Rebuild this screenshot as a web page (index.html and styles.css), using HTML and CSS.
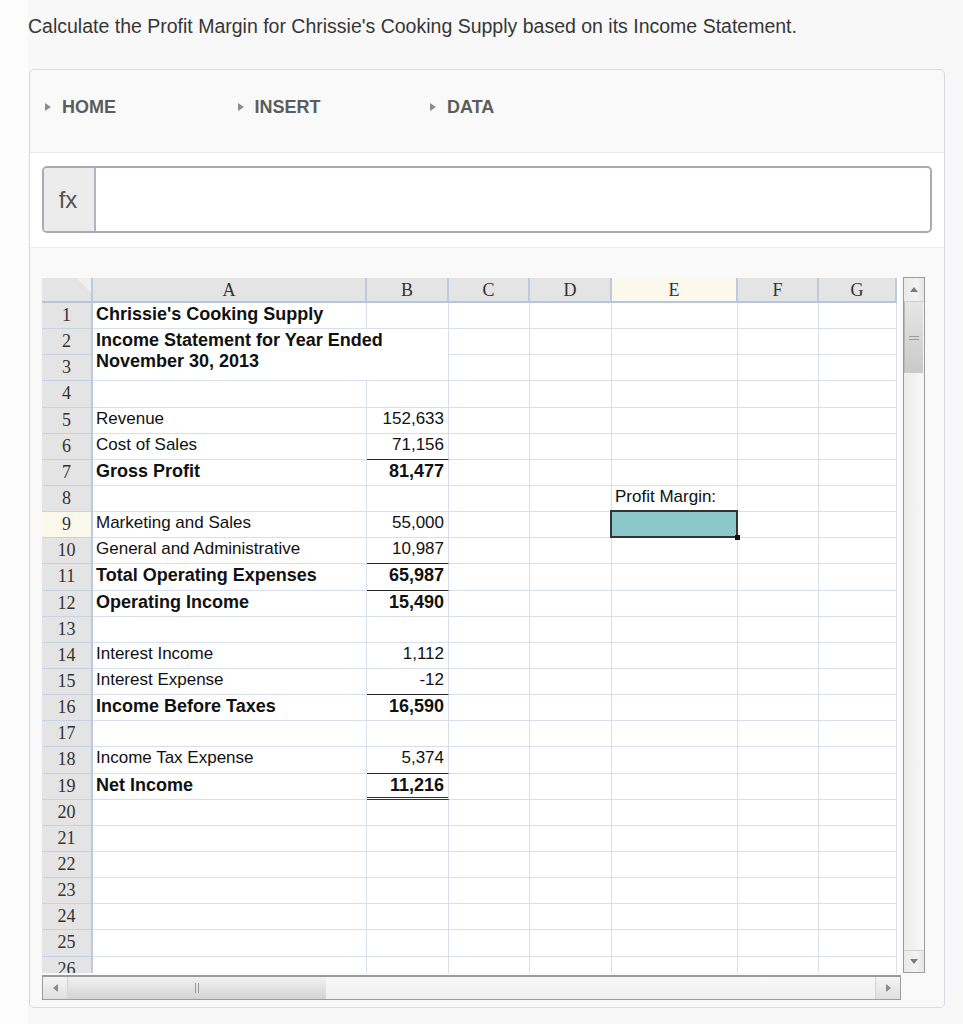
FILE: index.html
```html
<!DOCTYPE html>
<html>
<head>
<meta charset="utf-8">
<title>Profit Margin</title>
<link rel="stylesheet" href="styles.css">
</head>
<body>
<div class="page">
  <p class="title">Calculate the Profit Margin for Chrissie's Cooking Supply based on its Income Statement.</p>
  <div class="panel">
    <div class="toolbar">
      <div class="tab"><span class="tri"></span>HOME</div>
      <div class="tab"><span class="tri"></span>INSERT</div>
      <div class="tab"><span class="tri"></span>DATA</div>
    </div>
    <div class="formula">
      <div class="fxbox"><div class="fx">fx</div><div class="fxinput"></div></div>
    </div>
    <div class="gridsec">
      <div class="sheet">
        <div class="viewport">
          <div class="cells">
            <div class="ch corner"></div><div class="ch">A</div><div class="ch">B</div><div class="ch">C</div><div class="ch">D</div><div class="ch hl">E</div><div class="ch">F</div><div class="ch">G</div>

            <div class="rh">1</div><div class="c b">Chrissie's Cooking Supply</div><div class="c n"></div><div class="c"></div><div class="c"></div><div class="c"></div><div class="c"></div><div class="c"></div>

            <div class="c b merged">Income Statement for Year Ended<br>November 30, 2013</div>
            <div class="rh">2</div><div class="c"></div><div class="c"></div><div class="c"></div><div class="c"></div><div class="c"></div>
            <div class="rh">3</div><div class="c"></div><div class="c"></div><div class="c"></div><div class="c"></div><div class="c"></div>

            <div class="rh">4</div><div class="c"></div><div class="c n"></div><div class="c"></div><div class="c"></div><div class="c"></div><div class="c"></div><div class="c"></div>
            <div class="rh">5</div><div class="c">Revenue</div><div class="c n">152,633</div><div class="c"></div><div class="c"></div><div class="c"></div><div class="c"></div><div class="c"></div>
            <div class="rh">6</div><div class="c">Cost of Sales</div><div class="c n bb">71,156</div><div class="c"></div><div class="c"></div><div class="c"></div><div class="c"></div><div class="c"></div>
            <div class="rh">7</div><div class="c b">Gross Profit</div><div class="c n b">81,477</div><div class="c"></div><div class="c"></div><div class="c"></div><div class="c"></div><div class="c"></div>
            <div class="rh">8</div><div class="c"></div><div class="c n"></div><div class="c"></div><div class="c"></div><div class="c">Profit Margin:</div><div class="c"></div><div class="c"></div>
            <div class="rh hl">9</div><div class="c">Marketing and Sales</div><div class="c n">55,000</div><div class="c"></div><div class="c"></div><div class="c sel"></div><div class="c"></div><div class="c"></div>
            <div class="rh">10</div><div class="c">General and Administrative</div><div class="c n bb">10,987</div><div class="c"></div><div class="c"></div><div class="c"></div><div class="c"></div><div class="c"></div>
            <div class="rh">11</div><div class="c b">Total Operating Expenses</div><div class="c n b bb">65,987</div><div class="c"></div><div class="c"></div><div class="c"></div><div class="c"></div><div class="c"></div>
            <div class="rh">12</div><div class="c b">Operating Income</div><div class="c n b">15,490</div><div class="c"></div><div class="c"></div><div class="c"></div><div class="c"></div><div class="c"></div>
            <div class="rh">13</div><div class="c"></div><div class="c n"></div><div class="c"></div><div class="c"></div><div class="c"></div><div class="c"></div><div class="c"></div>
            <div class="rh">14</div><div class="c">Interest Income</div><div class="c n">1,112</div><div class="c"></div><div class="c"></div><div class="c"></div><div class="c"></div><div class="c"></div>
            <div class="rh">15</div><div class="c">Interest Expense</div><div class="c n bb">-12</div><div class="c"></div><div class="c"></div><div class="c"></div><div class="c"></div><div class="c"></div>
            <div class="rh">16</div><div class="c b">Income Before Taxes</div><div class="c n b">16,590</div><div class="c"></div><div class="c"></div><div class="c"></div><div class="c"></div><div class="c"></div>
            <div class="rh">17</div><div class="c"></div><div class="c n"></div><div class="c"></div><div class="c"></div><div class="c"></div><div class="c"></div><div class="c"></div>
            <div class="rh">18</div><div class="c">Income Tax Expense</div><div class="c n bb">5,374</div><div class="c"></div><div class="c"></div><div class="c"></div><div class="c"></div><div class="c"></div>
            <div class="rh">19</div><div class="c b">Net Income</div><div class="c n b dbl">11,216</div><div class="c"></div><div class="c"></div><div class="c"></div><div class="c"></div><div class="c"></div>
            <div class="rh">20</div><div class="c"></div><div class="c n"></div><div class="c"></div><div class="c"></div><div class="c"></div><div class="c"></div><div class="c"></div>
            <div class="rh">21</div><div class="c"></div><div class="c n"></div><div class="c"></div><div class="c"></div><div class="c"></div><div class="c"></div><div class="c"></div>
            <div class="rh">22</div><div class="c"></div><div class="c n"></div><div class="c"></div><div class="c"></div><div class="c"></div><div class="c"></div><div class="c"></div>
            <div class="rh">23</div><div class="c"></div><div class="c n"></div><div class="c"></div><div class="c"></div><div class="c"></div><div class="c"></div><div class="c"></div>
            <div class="rh">24</div><div class="c"></div><div class="c n"></div><div class="c"></div><div class="c"></div><div class="c"></div><div class="c"></div><div class="c"></div>
            <div class="rh">25</div><div class="c"></div><div class="c n"></div><div class="c"></div><div class="c"></div><div class="c"></div><div class="c"></div><div class="c"></div>
            <div class="rh">26</div><div class="c"></div><div class="c n"></div><div class="c"></div><div class="c"></div><div class="c"></div><div class="c"></div><div class="c"></div>
          </div>
        </div>
        <div class="vscroll">
          <div class="vbtn"><span class="arr-up"></span></div>
          <div class="vthumb"><span class="vgrip"></span></div>
          <div class="vtrack"></div>
          <div class="vbtn down"><span class="arr-down"></span></div>
        </div>
        <div class="hscroll">
          <div class="hbtn"><span class="arr-left"></span></div>
          <div class="hthumb"><span class="hgrip"></span></div>
          <div class="htrack"></div>
          <div class="hbtn right"><span class="arr-right"></span></div>
        </div>
      </div>
    </div>
  </div>
</div>
</body>
</html>
```
FILE: styles.css
```css
* { box-sizing: border-box; }
html, body { margin: 0; padding: 0; }
body {
  background: #fdfdfd;
  font-family: "Liberation Sans", Arial, sans-serif;
}
.page {
  margin-left: 28px;
  background: #f8f8f8;
  min-height: 1024px;
  padding-top: 15px;
  padding-bottom: 10px;
}
.title {
  margin: 0;
  font-size: 19.5px;
  line-height: 22px;
  color: #363636;
}
.panel {
  margin-top: 32px;
  margin-left: 1px;
  width: 916px;
  border: 1px solid #d8dbdf;
  border-radius: 5px;
  background: #f9f9f9;
}
.toolbar {
  height: 83px;
  border-bottom: 1px solid #e8e8e8;
  display: flex;
  align-items: center;
  padding-left: 15px;
  padding-bottom: 8px;
}
.tab {
  width: 192.5px;
  display: flex;
  align-items: center;
  font-weight: bold;
  font-size: 18px;
  color: #5c5c5c;
}
.tri {
  width: 0;
  height: 0;
  border-left: 6px solid #8c8c8c;
  border-top: 4px solid transparent;
  border-bottom: 4px solid transparent;
  margin-right: 11px;
}
.formula {
  background: #fff;
  padding: 13px 12px 14px;
  border-bottom: 1px solid #ebebeb;
}
.fxbox {
  height: 67px;
  border: 2px solid #a9a9b9;
  border-radius: 5px;
  display: flex;
  overflow: hidden;
  background: #fff;
}
.fx {
  width: 52px;
  background: #ececec;
  border-right: 2px solid #b3b3c1;
  display: flex;
  align-items: center;
  justify-content: center;
  font-size: 24px;
  color: #555;
  padding-right: 2px;
}
.fxinput { flex: 1; }
.gridsec {
  padding: 30px 12px 7px;
}
.sheet {
  display: grid;
  grid-template-columns: 858px 25px;
  grid-template-rows: 695px 25px;
  row-gap: 2px;
}
.viewport {
  overflow: hidden;
  background: #fff;
}
.cells {
  display: grid;
  grid-template-columns: 51px 274px 82px 81px 82px 126px 81px 78px;
  grid-template-rows: 25px repeat(26, 26.15px);
}
.ch {
  background: #e4e4e4;
  border-right: 2px solid #bccade;
  border-bottom: 2px solid #b5c5db;
  font-family: "Liberation Serif", "Times New Roman", serif;
  font-size: 18px;
  color: #333;
  display: flex;
  align-items: center;
  justify-content: center;
  padding-top: 2px;
}
.ch.hl { background: #fbf8ec; }
.ch.corner {
  background: linear-gradient(225deg, #efefef 0, #efefef 10px, #e4e4e4 10px);
}
.rh {
  background: #e4e4e4;
  border-right: 2px solid #bacadf;
  border-bottom: 1px solid #c6d2e4;
  font-family: "Liberation Serif", "Times New Roman", serif;
  font-size: 18px;
  color: #333;
  display: flex;
  align-items: center;
  justify-content: center;
}
.rh.hl { background: #fbf8ec; }
.c {
  border-right: 1px solid #d7dfec;
  border-bottom: 1px solid #d7dfec;
  font-size: 17px;
  line-height: 20px;
  color: #111;
  display: flex;
  align-items: flex-start;
  padding: 1px 3px 0;
  white-space: nowrap;
  overflow: visible;
}
.n { justify-content: flex-end; padding-right: 4px; }
.b { font-weight: bold; font-size: 18px; }
.bb { border-bottom-color: #262626; }
.dbl { border-bottom: 3px double #333; }
.merged {
  grid-column: 2 / span 2;
  grid-row: 3 / span 2;
  line-height: 21px;
  white-space: normal;
  padding-top: 1px;
}
.sel {
  position: relative;
  background: #8cc7cc;
}
.sel::before {
  content: "";
  position: absolute;
  top: -2px;
  left: -2px;
  right: -1px;
  bottom: -1px;
  border: 2px solid #333;
}
.sel::after {
  content: "";
  position: absolute;
  right: -3px;
  bottom: -3px;
  width: 5px;
  height: 5px;
  background: #111;
}

/* vertical scrollbar */
.vscroll {
  margin-top: -1px;
  margin-left: 3px;
  display: flex;
  flex-direction: column;
  border: 1px solid #9c9c9c;
  box-shadow: inset 1px 1px 0 #b8b8b8;
  background: #f4f4f4;
}
.vbtn {
  height: 24px;
  flex: none;
  background: linear-gradient(to right, #e9e9e9, #f3f3f3 60%, #e6e6e6);
  display: flex;
  align-items: center;
  justify-content: center;
  border-bottom: 1px solid #d0d0d0;
}
.vbtn.down { height: 22px; border-bottom: none; border-top: 1px solid #d0d0d0; }
.arr-up {
  width: 0; height: 0;
  border-bottom: 5px solid #7c7c7c;
  border-left: 4px solid transparent;
  border-right: 4px solid transparent;
}
.arr-down {
  width: 0; height: 0;
  border-top: 5px solid #7c7c7c;
  border-left: 4px solid transparent;
  border-right: 4px solid transparent;
}
.vthumb {
  height: 71px;
  flex: none;
  margin: 0 1px;
  background: linear-gradient(to bottom, #e6e6e6, #c9c9c9);
  display: flex;
  align-items: center;
  justify-content: center;
}
.vgrip {
  width: 10px;
  height: 4px;
  border-top: 1px solid #9a9a9a;
  border-bottom: 1px solid #9a9a9a;
}
.vtrack {
  flex: 1;
  background: linear-gradient(to right, #ececec, #f7f7f7);
}

/* horizontal scrollbar */
.hscroll {
  grid-column: 1;
  margin-right: -1px;
  display: flex;
  border: 1px solid #9c9c9c;
  border-top: 2px solid #9a9a9a;
  background: #f6f6f6;
}
.hbtn {
  width: 25px;
  flex: none;
  background: linear-gradient(to bottom, #f4f4f4, #e0e0e0);
  display: flex;
  align-items: center;
  justify-content: center;
  border-right: 1px solid #d4d4d4;
}
.hbtn.right { border-right: none; border-left: 1px solid #d4d4d4; }
.arr-left {
  width: 0; height: 0;
  border-right: 5px solid #8a8a8a;
  border-top: 4px solid transparent;
  border-bottom: 4px solid transparent;
}
.arr-right {
  width: 0; height: 0;
  border-left: 5px solid #8a8a8a;
  border-top: 4px solid transparent;
  border-bottom: 4px solid transparent;
}
.hthumb {
  width: 258px;
  flex: none;
  background: linear-gradient(to bottom, #f1f1f1, #d3d3d3);
  display: flex;
  align-items: center;
  justify-content: center;
}
.hgrip {
  width: 4px;
  height: 10px;
  border-left: 1px solid #9a9a9a;
  border-right: 1px solid #9a9a9a;
}
.htrack {
  flex: 1;
  background: linear-gradient(to bottom, #f8f8f8, #f0f0f0);
}
```
